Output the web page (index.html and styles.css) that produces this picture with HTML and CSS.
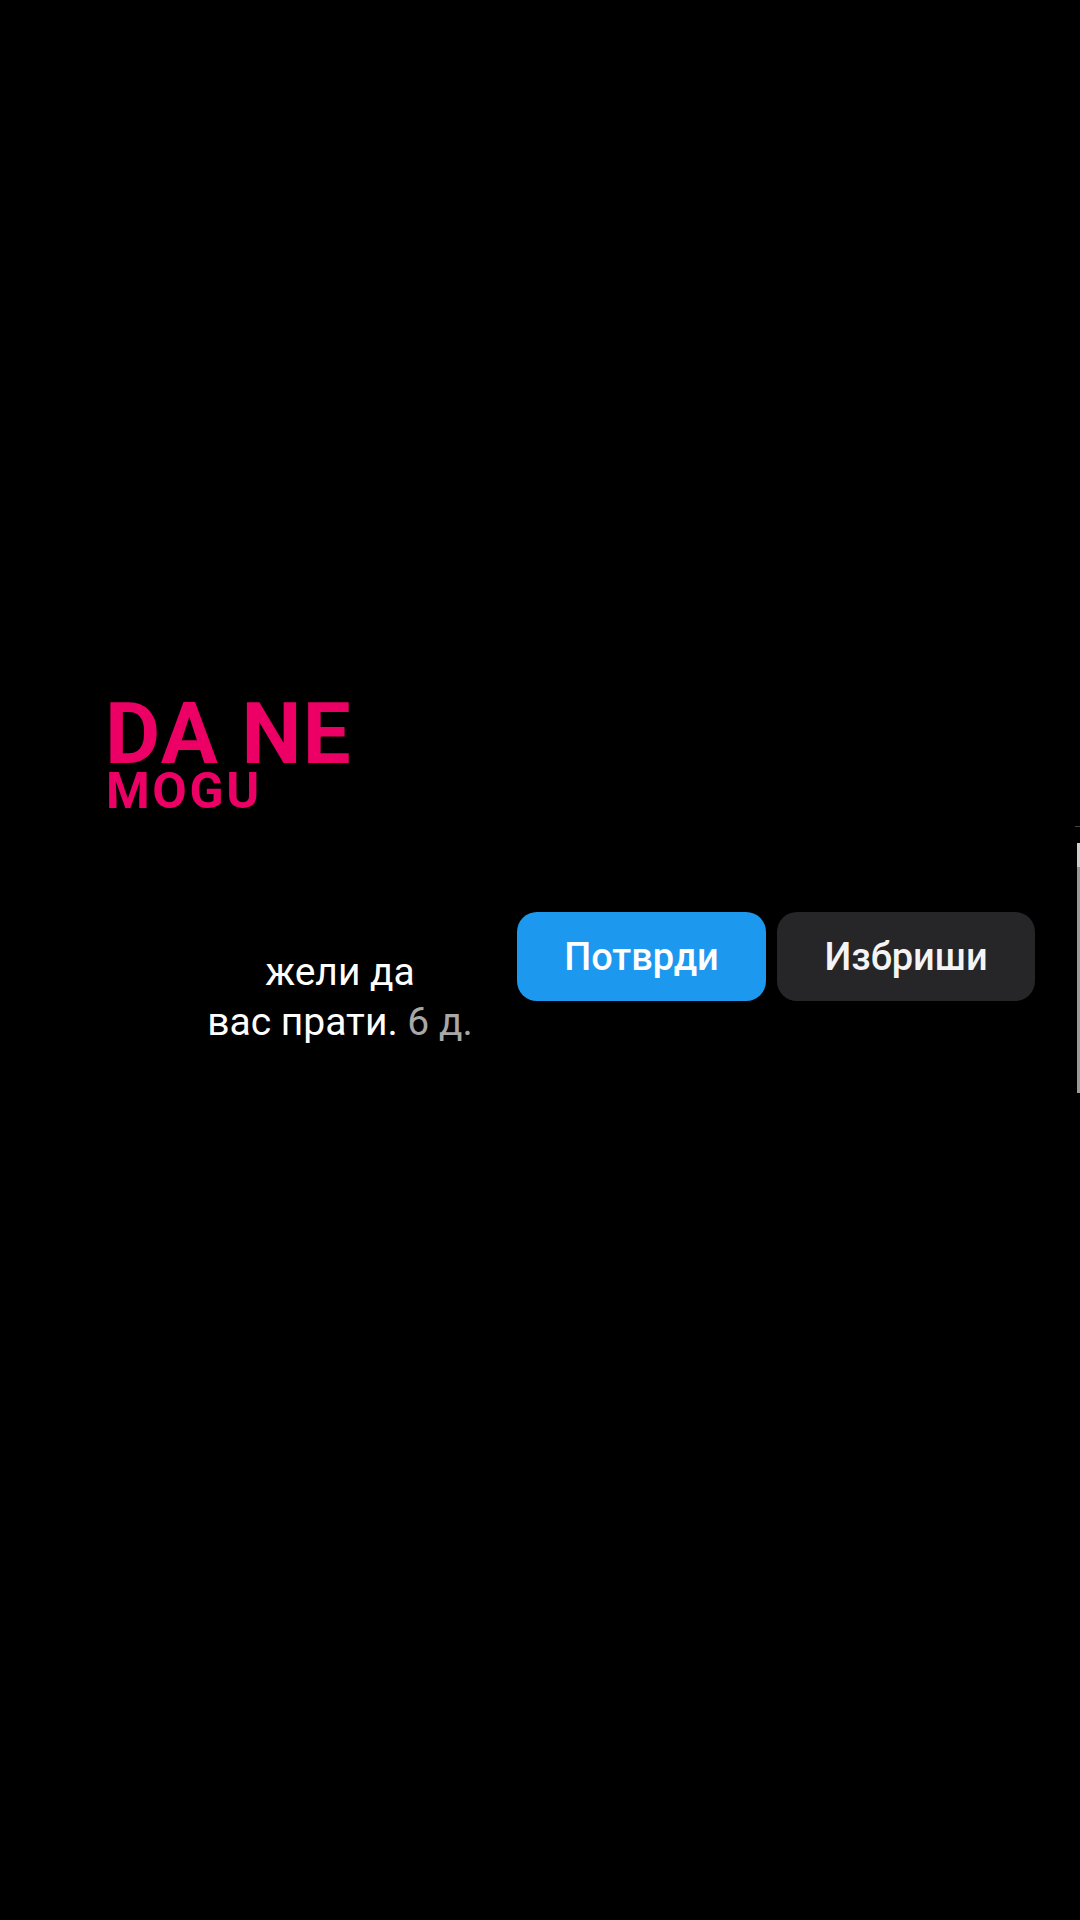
FILE: index.html
```html
<!DOCTYPE html>
<html lang="sr">
<head>
<meta charset="utf-8">
<title>DA NE MOGU</title>
<link rel="stylesheet" href="styles.css">
</head>
<body>
<div class="page">
  <div class="logo">
    <div class="logo-big">DA NE</div>
    <div class="logo-small">MOGU</div>
  </div>
  <div class="request">
    <div class="message">
      <div class="line">жели да</div>
      <div class="line">вас прати. <span class="time">6 д.</span></div>
    </div>
    <div class="actions">
      <div class="btn btn-confirm">Потврди</div>
      <div class="btn btn-delete">Избриши</div>
    </div>
  </div>
  <div class="scroll-mark"></div>
  <div class="scrollbar"><div class="thumb"></div></div>
</div>
</body>
</html>
```

FILE: styles.css
```css
html, body {
  margin: 0;
  padding: 0;
  background: #000;
}

.page {
  position: relative;
  width: 1080px;
  height: 1920px;
  background: #000;
  font-family: Roboto, "Noto Sans", "DejaVu Sans", sans-serif;
  overflow: hidden;
}

.logo {
  padding-top: 699px;
  padding-left: 105px;
  color: #ec0066;
  font-weight: 700;
}

.logo-big {
  font-size: 85px;
  line-height: 70px;
  letter-spacing: 1.3px;
}

.logo-small {
  font-size: 50px;
  line-height: 44px;
  letter-spacing: 2.6px;
  padding-left: 1px;
}

.request {
  display: flex;
  align-items: flex-start;
  margin-top: 99px;
  padding-left: 168px;
}

.message {
  width: 344px;
  margin-top: 35px;
  text-align: center;
  color: #fff;
  font-size: 39px;
  line-height: 50px;
}

.time {
  color: #a8a8a8;
}

.actions {
  display: flex;
  gap: 11px;
  margin-left: 5px;
}

.btn {
  height: 89px;
  border-radius: 20px;
  display: flex;
  align-items: center;
  justify-content: center;
  font-size: 38px;
  font-weight: 500;
  color: #fff;
}

.btn-confirm {
  width: 249px;
  background: #1c98ee;
}

.btn-delete {
  width: 258px;
  background: #262629;
  color: #f4f4f4;
}

.scroll-mark {
  position: absolute;
  right: 0;
  top: 826px;
  width: 5px;
  height: 1px;
  background: #444;
}

.scrollbar {
  position: absolute;
  right: 0;
  top: 843px;
  width: 3px;
  height: 250px;
  background: #9a9a9a;
}

.thumb {
  height: 24px;
  background: #d0d0d0;
}
```
